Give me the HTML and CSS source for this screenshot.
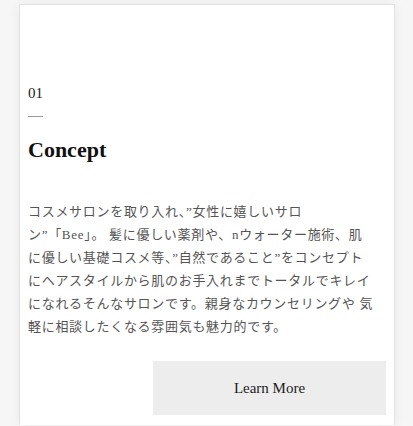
FILE: index.html
```html
<!DOCTYPE html>
<html lang="ja">
<head>
<meta charset="utf-8">
<link rel="stylesheet" href="styles.css">
</head>
<body>
<div class="card">
  <div class="num">01</div>
  <div class="rule"></div>
  <h2 class="title">Concept</h2>
  <p class="text">コスメサロンを取り入れ、”女性に嬉しいサロ<br>ン”「Bee」。 髪に優しい薬剤や、nウォーター施術、肌に優しい基礎コスメ等、”自然であること”をコンセプトにヘアスタイルから肌のお手入れまでトータルでキレイになれるそんなサロンです。親身なカウンセリングや 気軽に相談したくなる雰囲気も魅力的です。</p>
  <div class="actions"><a class="btn">Learn More</a></div>
</div>
</body>
</html>
```
FILE: styles.css
```css
html, body { margin: 0; padding: 0; }
body {
  background: #f6f6f6;
  width: 413px;
  height: 426px;
  overflow: hidden;
  font-family: "Liberation Serif", "Noto Sans CJK JP", serif;
}
.card {
  margin: 4px 0 0 19px;
  width: 358px;
  height: 340px;
  background: #fff;
  border: 1px solid #e2e2e2;
  border-bottom: none;
  box-shadow: 0 0 12px rgba(0,0,0,0.05);
  padding: 80px 8px 0 8px;
}
.num {
  font-size: 15px;
  line-height: 17px;
  color: #222;
}
.rule {
  width: 15px;
  height: 1px;
  background: #999;
  margin-top: 14px;
}
.title {
  margin: 20px 0 0 0;
  font-size: 22px;
  line-height: 26px;
  font-weight: bold;
  color: #111;
}
.text {
  margin: 37px 12px 0 0;
  font-size: 13px;
  line-height: 23px;
  letter-spacing: 0.7px;
  color: #555;
}
.actions {
  display: flex;
  justify-content: flex-end;
  margin-top: 23px;
}
.btn {
  width: 233px;
  height: 54px;
  background: #ededed;
  color: #222;
  font-size: 15px;
  display: flex;
  align-items: center;
  justify-content: center;
}
```
